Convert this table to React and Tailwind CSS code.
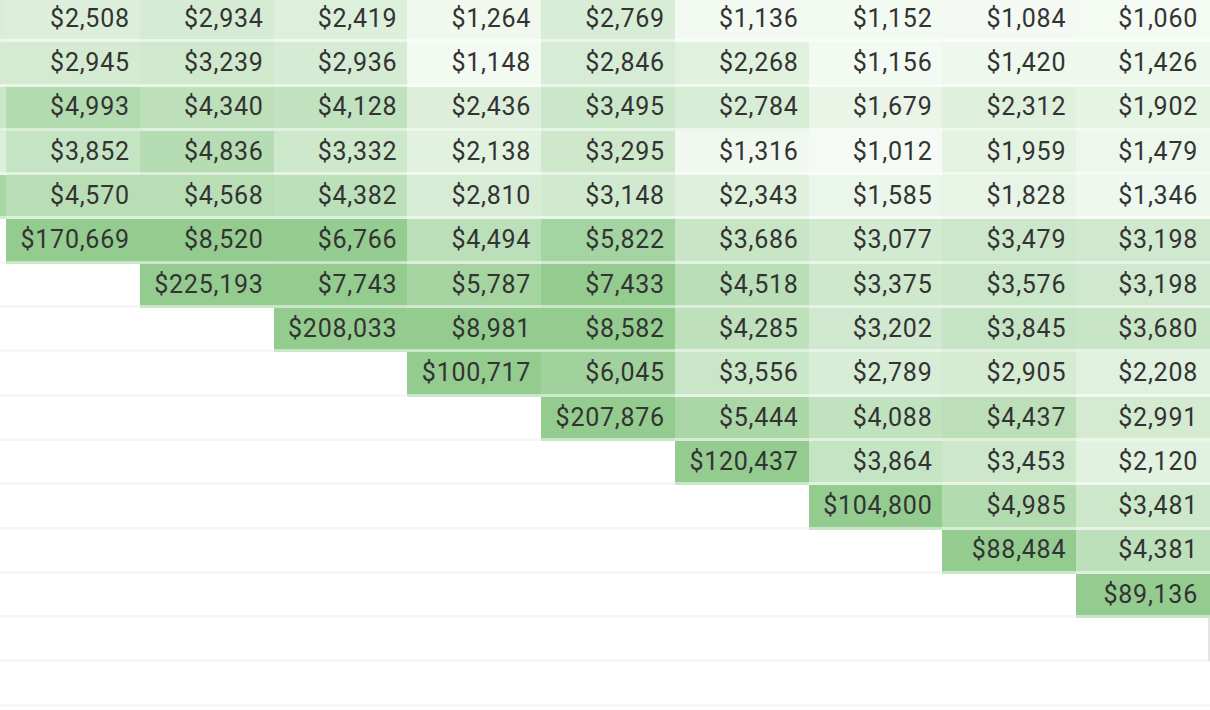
import React from "react";

// cohort matrix, null = no value yet
const rows = [
  [2508, 2934, 2419, 1264, 2769, 1136, 1152, 1084, 1060],
  [2945, 3239, 2936, 1148, 2846, 2268, 1156, 1420, 1426],
  [4993, 4340, 4128, 2436, 3495, 2784, 1679, 2312, 1902],
  [3852, 4836, 3332, 2138, 3295, 1316, 1012, 1959, 1479],
  [4570, 4568, 4382, 2810, 3148, 2343, 1585, 1828, 1346],
  [170669, 8520, 6766, 4494, 5822, 3686, 3077, 3479, 3198],
  [null, 225193, 7743, 5787, 7433, 4518, 3375, 3576, 3198],
  [null, null, 208033, 8981, 8582, 4285, 3202, 3845, 3680],
  [null, null, null, 100717, 6045, 3556, 2789, 2905, 2208],
  [null, null, null, null, 207876, 5444, 4088, 4437, 2991],
  [null, null, null, null, null, 120437, 3864, 3453, 2120],
  [null, null, null, null, null, null, 104800, 4985, 3481],
  [null, null, null, null, null, null, null, 88484, 4381],
  [null, null, null, null, null, null, null, null, 89136],
  [null, null, null, null, null, null, null, null, null],
  [null, null, null, null, null, null, null, null, null],
];

// clipped column on the far left
const edge = [2700, 2900, 3500, 2500, 5600, null, null, null, null, null, null, null, null, null, null, null];

const LOW = [245, 251, 244];
const HIGH = [148, 204, 144];

const shade = (v) => {
  if (v == null) return "#ffffff";
  const t = Math.min(Math.max((v - 1000) / 5800, 0), 1);
  const c = LOW.map((l, i) => Math.round(l + (HIGH[i] - l) * t));
  return `rgb(${c[0]},${c[1]},${c[2]})`;
};

const fmt = (v) => "$" + v.toLocaleString("en-US");

const Cell = ({ value, last, ruleRight }) => (
  <div
    className={`h-[44.3px] flex items-center justify-end border-b-[3px] ${
      value == null ? "border-[#f6f7f6]" : "border-white/50"
    } ${last ? "pr-[12px]" : "pr-[10px]"} ${ruleRight ? "border-r-2 border-r-[#e4e4e4]" : ""}`}
    style={{ backgroundColor: shade(value) }}
  >
    {value != null && <span>{fmt(value)}</span>}
  </div>
);

export default function App() {
  return (
    <div className="w-[1210px] h-[710px] overflow-hidden bg-white">
      <div className="-mt-[2px] grid grid-cols-[6px_repeat(9,minmax(0,1fr))] font-[family-name:Roboto,'Liberation_Sans',sans-serif] text-[25px] tracking-[0.03em] text-[#333333]">
        {rows.map((row, r) => (
          <React.Fragment key={r}>
            <div
              className={`h-[44.3px] border-b-[3px] ${
                edge[r] == null ? "border-[#f6f7f6]" : "border-white/50"
              }`}
              style={{ backgroundColor: shade(edge[r]) }}
            />
            {row.map((v, c) => (
              <Cell key={c} value={v} last={c === 8} ruleRight={r === 14 && c === 8} />
            ))}
          </React.Fragment>
        ))}
      </div>
    </div>
  );
}
